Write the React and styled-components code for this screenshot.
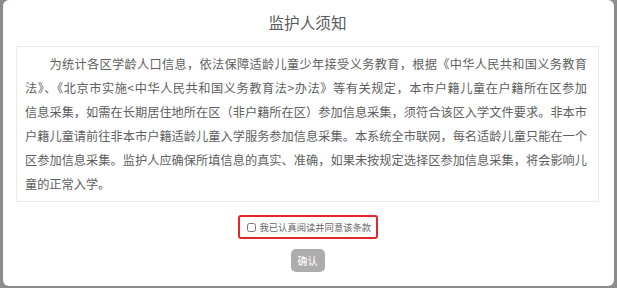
import React, { useState } from 'react'
import styled, { createGlobalStyle } from 'styled-components'

const GlobalStyle = createGlobalStyle`
  html, body {
    margin: 0;
    padding: 0;
    background: #8c8c8c;
  }
  body {
    font-family: "Noto Sans CJK SC", "Noto Sans", sans-serif;
  }
`

const lines = [
  '为统计各区学龄人口信息，依法保障适龄儿童少年接受义务教育，根据《中华人民共和国义务教育',
  '法》、《北京市实施<中华人民共和国义务教育法>办法》等有关规定，本市户籍儿童在户籍所在区参加',
  '信息采集，如需在长期居住地所在区（非户籍所在区）参加信息采集，须符合该区入学文件要求。非本市',
  '户籍儿童请前往非本市户籍适龄儿童入学服务参加信息采集。本系统全市联网，每名适龄儿童只能在一个',
  '区参加信息采集。监护人应确保所填信息的真实、准确，如果未按规定选择区参加信息采集，将会影响儿',
  '童的正常入学。',
]

function App() {
  const [agreed, setAgreed] = useState(false)

  return (
    <>
      <GlobalStyle />
      <Modal>
        <Title>监护人须知</Title>
        <Notice>
          {lines.map((text, i) => (
            <Line key={i} first={i === 0} last={i === lines.length - 1}>
              {text}
            </Line>
          ))}
        </Notice>
        <AgreeRow>
          <AgreeLabel>
            <CheckBox
              type="checkbox"
              checked={agreed}
              onChange={e => setAgreed(e.target.checked)}
            />
            我已认真阅读并同意该条款
          </AgreeLabel>
        </AgreeRow>
        <Footer>
          <ConfirmButton disabled={!agreed}>确认</ConfirmButton>
        </Footer>
      </Modal>
    </>
  )
}

const Modal = styled.div`
  box-sizing: border-box;
  width: 611px;
  height: 286px;
  margin: 0 3px;
  background: #fff;
  border-radius: 6px;
  display: flex;
  flex-direction: column;
  padding: 0 15px 0 13px;
`

const Title = styled.h3`
  margin: 0;
  padding-top: 11px;
  height: 35px;
  text-align: center;
  font-size: 15.6px;
  line-height: 22px;
  font-weight: 400;
  color: #5a5a5a;
`

const Notice = styled.div`
  border: 1px solid #ebebeb;
  padding: 5px 11px 5px 8px;
  color: #606060;
  font-size: 12.2px;
  line-height: 24px;
`

const Line = styled.span`
  display: block;
  white-space: nowrap;
  text-align: ${p => (p.last ? 'left' : 'justify')};
  text-align-last: ${p => (p.last ? 'left' : 'justify')};
  text-indent: ${p => (p.first ? '2em' : '0')};
`

const AgreeRow = styled.div`
  display: flex;
  justify-content: center;
  margin-top: 13px;
`

const AgreeLabel = styled.label`
  box-sizing: border-box;
  display: flex;
  align-items: center;
  gap: 4px;
  width: 140px;
  height: 24px;
  padding: 0 0 0 7px;
  border: 2px solid #e5262b;
  border-radius: 3px;
  font-size: 9.3px;
  color: #666;
  white-space: nowrap;
  cursor: pointer;
`

const CheckBox = styled.input`
  margin: 0;
  width: 9px;
  height: 9px;
`

const Footer = styled.div`
  display: flex;
  justify-content: center;
  margin-top: 10px;
`

const ConfirmButton = styled.button`
  width: 34px;
  height: 23px;
  padding: 0;
  border: none;
  border-radius: 5px;
  background: ${p => (p.disabled ? '#adadad' : '#3a8ee6')};
  color: #fff;
  font-family: inherit;
  font-size: 10px;
  cursor: ${p => (p.disabled ? 'not-allowed' : 'pointer')};
`

export default App
